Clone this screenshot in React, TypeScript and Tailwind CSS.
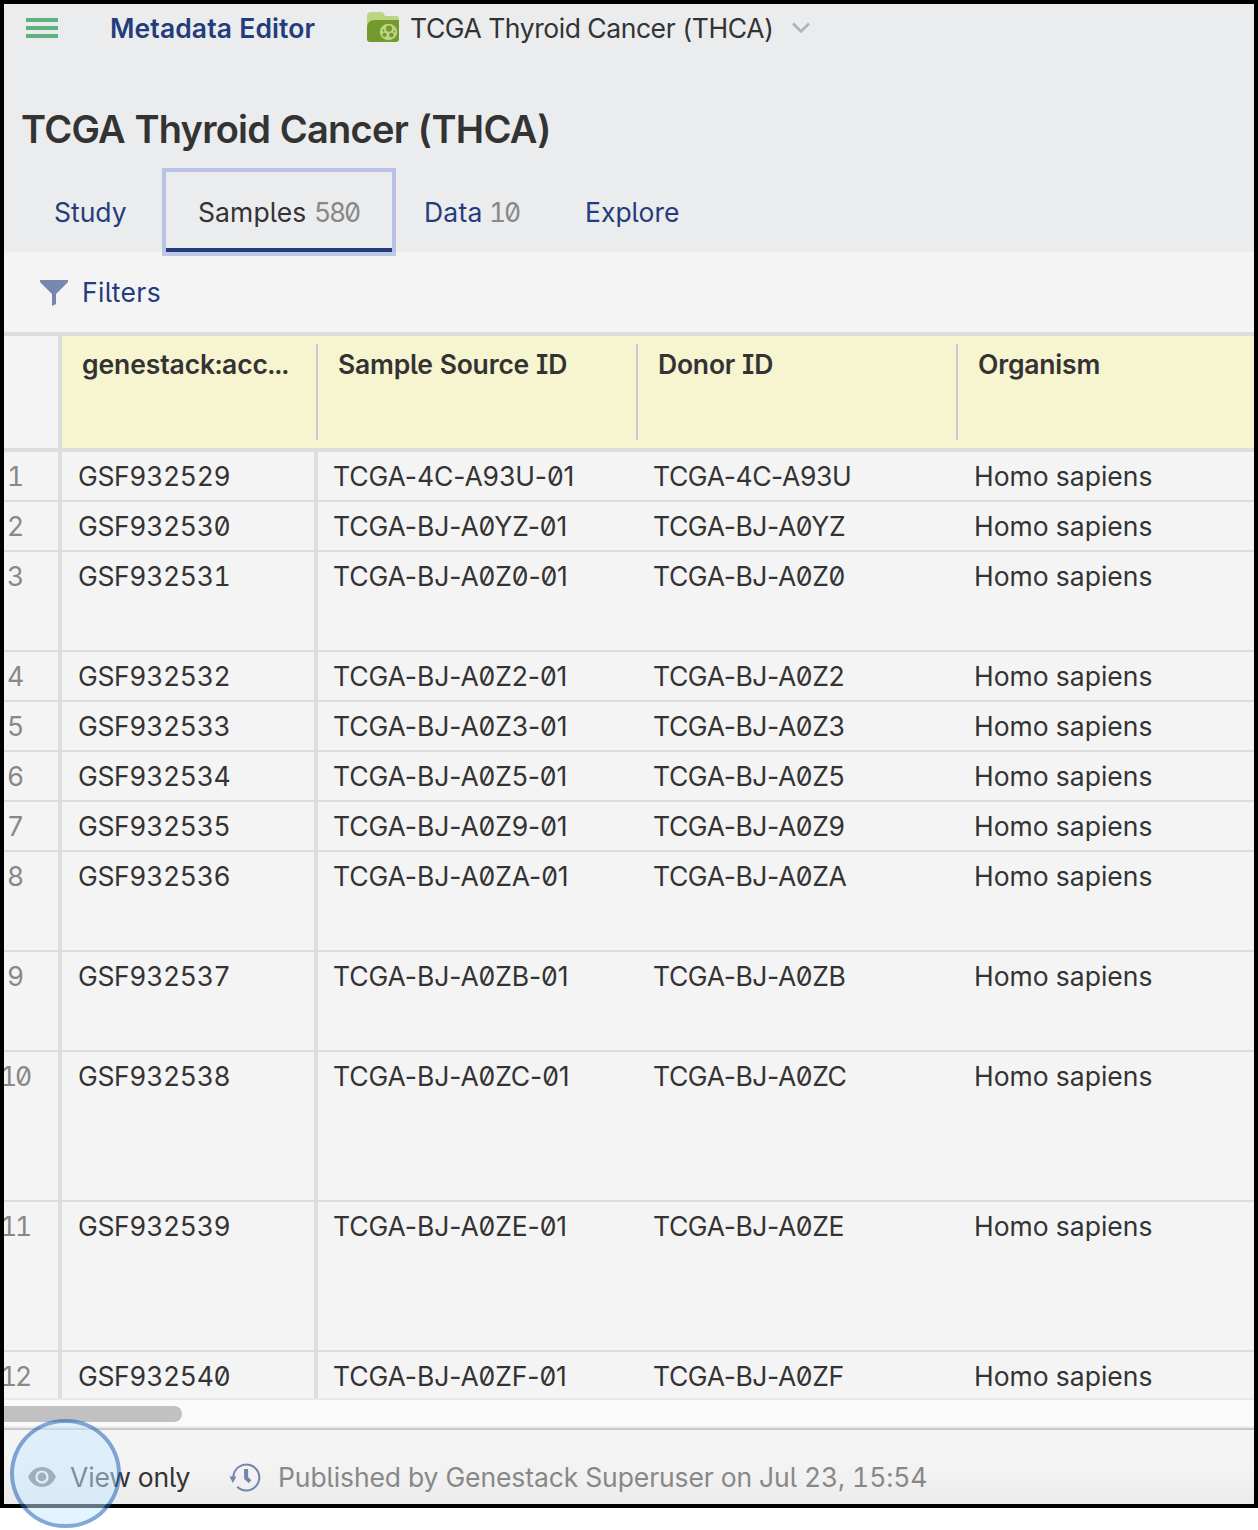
import React from "react";

type Row = { n: number; accession: string; source: string; donor: string; height: string };

const rows: Row[] = [
  { n: 1, accession: "GSF932529", source: "TCGA-4C-A93U-01", donor: "TCGA-4C-A93U", height: "h-[50px]" },
  { n: 2, accession: "GSF932530", source: "TCGA-BJ-A0YZ-01", donor: "TCGA-BJ-A0YZ", height: "h-[50px]" },
  { n: 3, accession: "GSF932531", source: "TCGA-BJ-A0Z0-01", donor: "TCGA-BJ-A0Z0", height: "h-[100px]" },
  { n: 4, accession: "GSF932532", source: "TCGA-BJ-A0Z2-01", donor: "TCGA-BJ-A0Z2", height: "h-[50px]" },
  { n: 5, accession: "GSF932533", source: "TCGA-BJ-A0Z3-01", donor: "TCGA-BJ-A0Z3", height: "h-[50px]" },
  { n: 6, accession: "GSF932534", source: "TCGA-BJ-A0Z5-01", donor: "TCGA-BJ-A0Z5", height: "h-[50px]" },
  { n: 7, accession: "GSF932535", source: "TCGA-BJ-A0Z9-01", donor: "TCGA-BJ-A0Z9", height: "h-[50px]" },
  { n: 8, accession: "GSF932536", source: "TCGA-BJ-A0ZA-01", donor: "TCGA-BJ-A0ZA", height: "h-[100px]" },
  { n: 9, accession: "GSF932537", source: "TCGA-BJ-A0ZB-01", donor: "TCGA-BJ-A0ZB", height: "h-[100px]" },
  { n: 10, accession: "GSF932538", source: "TCGA-BJ-A0ZC-01", donor: "TCGA-BJ-A0ZC", height: "h-[150px]" },
  { n: 11, accession: "GSF932539", source: "TCGA-BJ-A0ZE-01", donor: "TCGA-BJ-A0ZE", height: "h-[150px]" },
  { n: 12, accession: "GSF932540", source: "TCGA-BJ-A0ZF-01", donor: "TCGA-BJ-A0ZF", height: "h-[50px]" },
];

function FolderIcon() {
  return (
    <svg width="32" height="30" viewBox="0 0 32 30" className="block shrink-0">
      <path d="M0 4Q0 0 4 0H14Q16 0 17 2L18 4H29Q32 4 32 7V20H0Z" fill="#bcd582" />
      <path d="M0 16Q0 8 8 8H32V27Q32 30 29 30H3Q0 30 0 27Z" fill="#749a2e" />
      <ellipse cx="21.5" cy="20" rx="8.7" ry="8.2" fill="#bcd582" />
      <circle cx="22" cy="16.6" r="3.1" fill="#749a2e" />
      <circle cx="17.5" cy="22.8" r="2.1" fill="#749a2e" />
      <circle cx="24.4" cy="23" r="2.3" fill="#749a2e" />
      <circle cx="16.3" cy="18.6" r="1" fill="#749a2e" />
      <circle cx="27.4" cy="19.4" r="1" fill="#749a2e" />
    </svg>
  );
}

function HistoryIcon() {
  return (
    <svg width="32" height="30" viewBox="0 0 32 30" className="block shrink-0" fill="none" stroke="#7384ae">
      <path d="M4.3 15A13 13 0 1 1 8.2 24.8" strokeWidth="2" />
      <path d="M0.5 14.5H7.4L3.9 21Z" fill="#7384ae" stroke="none" />
      <path d="M17.1 7V16L21 19.6" strokeWidth="4" strokeLinejoin="round" />
    </svg>
  );
}

function EyeIcon() {
  return (
    <svg width="28" height="20" viewBox="0 0 28 20" className="block shrink-0">
      <path d="M0 10C3 3.5 8 0 14 0S25 3.5 28 10C25 16.5 20 20 14 20S3 16.5 0 10Z" fill="#777" />
      <circle cx="14" cy="10" r="5.5" fill="none" stroke="#f4f4f4" strokeWidth="2.2" />
    </svg>
  );
}

export default function App() {
  return (
    <div className="relative h-[1530px] w-[1258px] overflow-hidden bg-white font-['Inter',sans-serif] text-[26.5px] leading-[36px] text-[#333] [font-feature-settings:'ss02','zero','tnum']">
      <div className="flex h-[1508px] w-full flex-col overflow-hidden border-4 border-black bg-[#f4f4f4] whitespace-nowrap">
        <header className="h-[248px] shrink-0 bg-[#ebecee]">
          <div className="flex h-12 items-center pl-[22px]">
            <div className="flex flex-col gap-1">
              <span className="h-1 w-8 bg-[#5fb280]" />
              <span className="h-1 w-8 bg-[#5fb280]" />
              <span className="h-1 w-8 bg-[#5fb280]" />
            </div>
            <span className="ml-[52px] w-[257px] font-semibold tracking-[0.1px] text-[#253c7c]">Metadata Editor</span>
            <div className="mt-[-2px]"><FolderIcon /></div>
            <span className="ml-[11px] w-[382px] tracking-[-0.42px]">TCGA Thyroid Cancer (THCA)</span>
            <svg width="18" height="12" viewBox="0 0 18 12" className="block" fill="none" stroke="#b0b2b5" strokeWidth="2.5">
              <path d="M1 1.5L9 9.5L17 1.5" />
            </svg>
          </div>
          <h1 className="mt-[51px] pl-[17px] text-[38px] leading-[52px] font-semibold tracking-[-0.75px]">TCGA Thyroid Cancer (THCA)</h1>
          <nav className="mt-[13px] flex h-[88px] items-start text-[#253c7c]">
            <span className="ml-[50px] w-[108px] pt-[26px]">Study</span>
            <div className="relative z-10 flex h-[88px] w-[234px] gap-2 border-4 border-[#5a79d8]/35 pt-[22px] pl-8 text-[#333]">
              <span className="w-[108px] tracking-[0.1px]">Samples</span>
              <span className="tracking-[-2.2px] text-[#888]">580</span>
              <span className="absolute bottom-0 left-0 h-1 w-full bg-[#253c7c]" />
            </div>
            <span className="ml-[28px] w-[65px] pt-[26px] tracking-[0.2px]">Data</span>
            <span className="w-[96px] pt-[26px] tracking-[-2.2px] text-[#888]">10</span>
            <span className="pt-[26px]">Explore</span>
          </nav>
        </header>

        <div className="flex h-20 shrink-0 items-center pl-9 text-[#253c7c]">
          <svg width="28" height="26" viewBox="0 0 28 26" className="mt-0.5 block"><path d="M0 0H28V2L16 14V24L12 26V14L0 2Z" fill="#7788ae" /></svg>
          <span className="ml-[14px] tracking-[0.35px]">Filters</span>
        </div>

        <div className="flex h-[120px] shrink-0 border-y-4 border-[#ddd] font-semibold tracking-[-0.2px]">
          <div className="w-[58px] border-r-4 border-[#ddd]" />
          <div className="flex flex-1 bg-[#f7f4d0] py-2">
            <div className="w-64 border-r-2 border-[#c8c8cc] pt-[2px] pl-5 tracking-[-0.1px]">genestack:acc...</div>
            <div className="w-80 border-r-2 border-[#c8c8cc] pt-[2px] pl-5">Sample Source ID</div>
            <div className="w-80 border-r-2 border-[#c8c8cc] pt-[2px] pl-5">Donor ID</div>
            <div className="pt-[2px] pl-5">Organism</div>
          </div>
        </div>

        <div className="h-[946px] shrink-0 overflow-hidden">
          {rows.map((r) => (
            <div key={r.n} className={`flex ${r.height}`}>
              <div className={`w-[58px] border-r-4 border-b-2 border-[#ddd] pt-[6px] tracking-[-2.2px] text-[#888] ${r.n > 9 ? "pl-0" : "pl-1"}`}>
                <span className={r.n > 9 ? "ml-[-4px]" : "ml-[-1px]"}>{r.n}</span>
              </div>
              <div className="w-64 border-r-4 border-b-2 border-[#ddd] pt-[6px] pl-4 tracking-[-0.35px]">{r.accession}</div>
              <div className="w-80 border-b-2 border-[#ddd] pt-[6px] pl-[15px] tracking-[-0.1px] [font-feature-settings:'ss02','zero']">{r.source}</div>
              <div className="w-80 border-b-2 border-[#ddd] pt-[6px] pl-[15px] tracking-[-0.4px] [font-feature-settings:'ss02','zero']">{r.donor}</div>
              <div className="flex-1 border-b-2 border-[#ddd] pt-[6px] pl-4">Homo sapiens</div>
            </div>
          ))}
        </div>

        <div className="h-[30px] shrink-0 border-y-2 border-t-[#e8e8e8] border-b-[#ececec] bg-[#fafafa] pt-[6px]">
          <div className="h-4 w-[178px] rounded-r-full bg-[#c1c1c1]" />
        </div>
        <footer className="flex h-[76px] shrink-0 items-center border-t-2 border-[#c8c7cc] bg-linear-to-b from-[#f4f4f4] from-40% to-[#ececec] pt-[20px] pl-6">
          <EyeIcon />
          <span className="ml-[14px] w-[159px] tracking-[-0.15px]">View only</span>
          <HistoryIcon />
          <span className="ml-[17px] tracking-[-0.1px] text-[#888]">Published by Genestack Superuser on Jul 23, 15:54</span>
        </footer>
      </div>
      <div className="absolute top-[1419px] left-[10px] h-[109px] w-[111px] rounded-full border-4 border-[#1c61b8]/55 bg-[#c3eaff]/50 bg-clip-padding" />
    </div>
  );
}
